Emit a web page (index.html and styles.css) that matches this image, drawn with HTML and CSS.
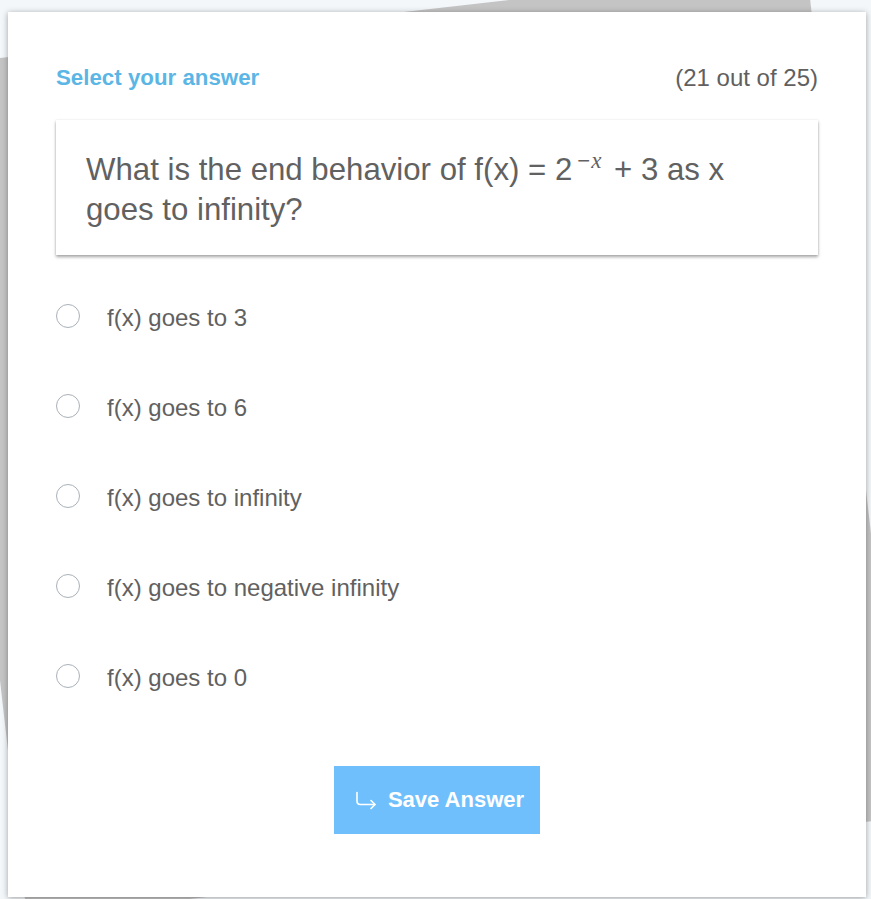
FILE: index.html
```html
<!DOCTYPE html>
<html lang="en">
<head>
    <meta charset="UTF-8">
    <meta name="viewport" content="width=device-width, initial-scale=1.0">
    <title>Quiz</title>
    <link rel="stylesheet" href="styles.css">
</head>
<body>
    <div class="deck-back"></div>

    <div class="card">
        <div class="card-header">
            <span class="prompt">Select your answer</span>
            <span class="progress">(21 out of 25)</span>
        </div>

        <div class="question">
            What is the end behavior of f(x) = 2<sup class="exp">&minus;<i>x</i></sup> + 3 as x goes to infinity?
        </div>

        <ul class="options">
            <li class="option"><span class="radio"></span><span class="option-text">f(x) goes to 3</span></li>
            <li class="option"><span class="radio"></span><span class="option-text">f(x) goes to 6</span></li>
            <li class="option"><span class="radio"></span><span class="option-text">f(x) goes to infinity</span></li>
            <li class="option"><span class="radio"></span><span class="option-text">f(x) goes to negative infinity</span></li>
            <li class="option"><span class="radio"></span><span class="option-text">f(x) goes to 0</span></li>
        </ul>

        <div class="actions">
            <button class="btn-save">
                <svg class="btn-icon" width="24" height="20" viewBox="0 0 24 20" fill="none" stroke="#fff" stroke-width="1.6" stroke-linecap="round" stroke-linejoin="round">
                    <path d="M3 1.5 V10 Q3 13.5 6.5 13.5 H21"/>
                    <path d="M17 9.5 L21 13.5 L17 17.5"/>
                </svg>
                Save Answer
            </button>
        </div>
    </div>
</body>
</html>
```

FILE: styles.css
```css
html, body {
    margin: 0;
    padding: 0;
}
body {
    font-family: "Liberation Sans", Arial, sans-serif;
    background-color: #f3f7fa;
    color: #666;
    position: relative;
    overflow: hidden;
    height: 899px;
}
.deck-back {
    position: absolute;
    left: -70px;
    top: 66px;
    width: 882px;
    height: 857px;
    background: #c4c4c4;
    transform-origin: 0 0;
    transform: rotate(-6.5deg);
}
.card {
    position: relative;
    box-sizing: border-box;
    width: 858px;
    height: 885px;
    margin: 12px 0 0 8px;
    padding: 52px 48px 0;
    background: #fff;
    box-shadow: 0 1px 6px rgba(0,0,0,0.35);
}
.card-header {
    display: flex;
    justify-content: space-between;
    align-items: center;
    height: 28px;
    line-height: 28px;
}
.prompt {
    color: #5bb6e5;
    font-size: 22.3px;
    font-weight: bold;
}
.progress {
    color: #606060;
    font-size: 24px;
}
.question {
    margin-top: 28px;
    padding: 30px 60px 25px 30px;
    font-size: 31.2px;
    line-height: 40px;
    color: #616161;
    box-shadow: 0 2px 3px rgba(0,0,0,0.35), 0 0 2px rgba(0,0,0,0.08);
}
.exp {
    font-size: 22px;
    line-height: 0;
    vertical-align: 12px;
    margin-left: 5px;
    margin-right: 4px;
}
.exp i {
    font-family: "Liberation Serif", "DejaVu Serif", serif;
    font-size: 23px;
    margin-left: 1px;
}
.options {
    list-style: none;
    margin: 18px 0 0;
    padding: 0;
}
.option {
    display: flex;
    align-items: center;
    height: 90px;
}
.radio {
    box-sizing: border-box;
    width: 24px;
    height: 24px;
    border: 1.5px solid #a9b1b8;
    border-radius: 50%;
    margin-top: -4px;
}
.option-text {
    margin-left: 27px;
    font-size: 24px;
    color: #616161;
}
.actions {
    display: flex;
    justify-content: center;
    margin-top: 43px;
}
.btn-save {
    display: flex;
    align-items: center;
    gap: 10px;
    height: 68px;
    padding: 0 16px 0 20px;
    border: none;
    background: #70bffd;
    color: #fff;
    font-family: "Liberation Sans", Arial, sans-serif;
    font-size: 22px;
    font-weight: bold;
    cursor: pointer;
}
.btn-icon {
    margin-top: 2px;
}
```
